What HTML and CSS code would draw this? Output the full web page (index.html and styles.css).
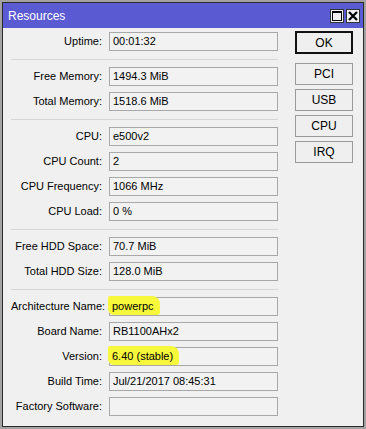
FILE: index.html
```html
<!DOCTYPE html>
<html lang="en">
<head>
    <meta charset="UTF-8">
    <meta name="viewport" content="width=device-width, initial-scale=1.0">
    <title>Resources</title>
    <link rel="stylesheet" href="styles.css">
</head>
<body>
    <div class="window">
        <div class="titlebar">
            <span class="title">Resources</span>
            <div class="title-buttons">
                <span class="tbtn">
                    <svg width="12" height="12" viewBox="0 0 12 12"><rect x="1.5" y="1.5" width="9" height="9" fill="none" stroke="#000" stroke-width="1"/><line x1="1" y1="2" x2="11" y2="2" stroke="#000" stroke-width="2"/></svg>
                </span>
                <span class="tbtn">
                    <svg width="12" height="12" viewBox="0 0 12 12"><path d="M2 2 L10 10 M10 2 L2 10" stroke="#000" stroke-width="2.2"/></svg>
                </span>
            </div>
        </div>
        <div class="content">
            <div class="form">
                <div class="group">
                    <label>Uptime:</label><div class="field">00:01:32</div>
                </div>
                <div class="sep"></div>
                <div class="group">
                    <label>Free Memory:</label><div class="field">1494.3 MiB</div>
                    <label>Total Memory:</label><div class="field">1518.6 MiB</div>
                </div>
                <div class="sep"></div>
                <div class="group">
                    <label>CPU:</label><div class="field">e500v2</div>
                    <label>CPU Count:</label><div class="field">2</div>
                    <label>CPU Frequency:</label><div class="field">1066 MHz</div>
                    <label>CPU Load:</label><div class="field">0 %</div>
                </div>
                <div class="sep"></div>
                <div class="group">
                    <label>Free HDD Space:</label><div class="field">70.7 MiB</div>
                    <label>Total HDD Size:</label><div class="field">128.0 MiB</div>
                </div>
                <div class="sep"></div>
                <div class="group">
                    <label>Architecture Name:</label><div class="field"><span class="marker">powerpc</span></div>
                    <label>Board Name:</label><div class="field">RB1100AHx2</div>
                    <label>Version:</label><div class="field"><span class="marker wide">6.40 (stable)</span></div>
                    <label>Build Time:</label><div class="field">Jul/21/2017 08:45:31</div>
                    <label>Factory Software:</label><div class="field"></div>
                </div>
            </div>
            <div class="buttons">
                <button class="btn default">OK</button>
                <button class="btn">PCI</button>
                <button class="btn">USB</button>
                <button class="btn">CPU</button>
                <button class="btn">IRQ</button>
            </div>
        </div>
    </div>
</body>
</html>
```

FILE: styles.css
```css
html, body {
    margin: 0;
    height: 100%;
}
body {
    background-color: #a3a3a3;
    font-family: "Liberation Sans", Arial, sans-serif;
    font-size: 11px;
    color: #000;
    padding: 2px 2px 2px 2px;
    box-sizing: border-box;
}
.window {
    width: 362px;
    height: 425px;
    box-sizing: border-box;
    border: 1px solid #2b2b2b;
    background-color: #f0f0f0;
}
.titlebar {
    height: 25px;
    background-color: #5a5ad2;
    display: flex;
    align-items: center;
    justify-content: space-between;
    padding: 0 3px 0 5px;
}
.title {
    color: #fff;
    font-size: 12px;
}
.title-buttons {
    display: flex;
    gap: 2px;
}
.tbtn {
    width: 14px;
    height: 14px;
    box-sizing: border-box;
    border: 1px solid #333;
    background-color: #f0f0f0;
    display: flex;
    align-items: center;
    justify-content: center;
}
.content {
    display: flex;
    padding: 4px 0 0 8px;
}
.form {
    width: 267px;
}
.group {
    display: grid;
    grid-template-columns: 91px 169px;
    column-gap: 7px;
    row-gap: 6px;
}
.group label {
    text-align: right;
    line-height: 19px;
    white-space: nowrap;
}
.field {
    height: 19px;
    box-sizing: border-box;
    border: 1px solid #a8a8a8;
    background-color: #f2f2f2;
    line-height: 17px;
    padding-left: 3px;
    white-space: nowrap;
}
.sep {
    height: 1px;
    background-color: #d6d6d6;
    margin: 8px 0 7px 0;
}
/* highlighter marks */
.marker {
    display: inline-block;
    background-color: #f7f73c;
    margin: -2px 0 0 -5px;
    padding: 2px 6px 1px 4px;
    line-height: 16px;
    border-radius: 2px 8px 3px 6px;
}
.buttons {
    display: flex;
    flex-direction: column;
    gap: 4px;
    margin-left: 17px;
    padding-top: 0;
}
.btn {
    width: 58px;
    height: 22px;
    font-family: "Liberation Sans", Arial, sans-serif;
    font-size: 12px;
    background-color: #efefef;
    border: 1px solid #9a9a9a;
    padding: 0;
    color: #000;
}
.btn.default {
    height: 23px;
    border: 2px solid #111;
    margin-top: -1px;
    margin-bottom: 5px;
}
```
